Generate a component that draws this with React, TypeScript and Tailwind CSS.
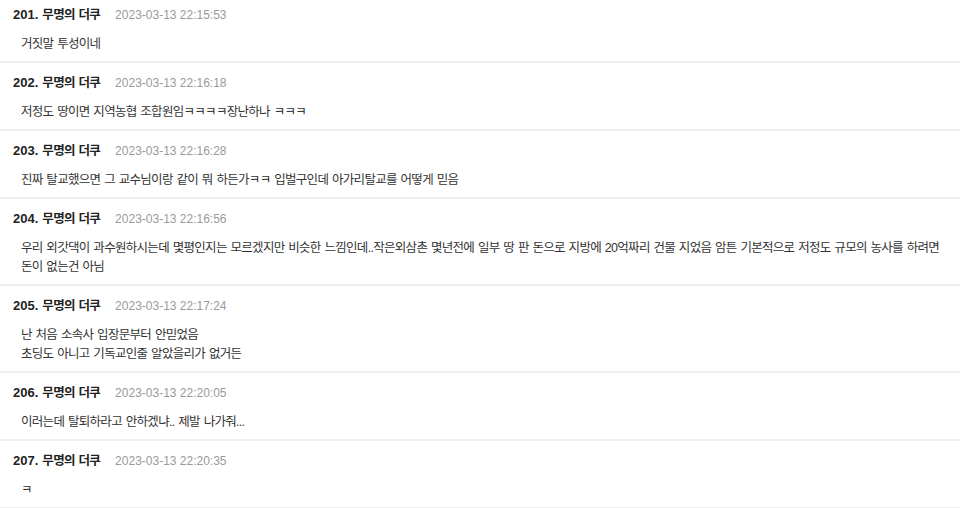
import React from "react";

type Comment = { no: number; time: string; text: string };

const comments: Comment[] = [
  { no: 201, time: "2023-03-13 22:15:53", text: "거짓말 투성이네" },
  { no: 202, time: "2023-03-13 22:16:18", text: "저정도 땅이면 지역농협 조합원임ㅋㅋㅋㅋ장난하나 ㅋㅋㅋ" },
  { no: 203, time: "2023-03-13 22:16:28", text: "진짜 탈교했으면 그 교수님이랑 같이 뭐 하든가ㅋㅋ 입벌구인데 아가리탈교를 어떻게 믿음" },
  {
    no: 204,
    time: "2023-03-13 22:16:56",
    text: "우리 외갓댁이 과수원하시는데 몇평인지는 모르겠지만 비슷한 느낌인데..작은외삼촌 몇년전에 일부 땅 판 돈으로 지방에 20억짜리 건물 지었음 암튼 기본적으로 저정도 규모의 농사를 하려면 돈이 없는건 아님",
  },
  { no: 205, time: "2023-03-13 22:17:24", text: "난 처음 소속사 입장문부터 안믿었음\n초딩도 아니고 기독교인줄 알았을리가 없거든" },
  { no: 206, time: "2023-03-13 22:20:05", text: "이러는데 탈퇴하라고 안하겠냐.. 제발 나가줘..." },
  { no: 207, time: "2023-03-13 22:20:35", text: "ㅋ" },
];

export default function App() {
  return (
    <div
      className="w-[960px] h-[508px] overflow-hidden bg-white"
      style={{ fontFamily: '"Liberation Sans", "Noto Sans CJK KR", Arial, sans-serif' }}
    >
      {comments.map((c, i) => (
        <div
          key={c.no}
          className={`pl-[12px] pr-[10px] pb-[7px] border-b-2 border-[#efefef] ${i === 0 ? "pt-[7px]" : "pt-[12px]"}`}
        >
          <div className="flex items-center h-[16px] leading-[16px]">
            <span className="ml-[1px] text-[13px] font-bold text-[#222]">{c.no}.</span>
            <span className="ml-[4px] text-[12.5px] font-bold text-[#222] tracking-[-0.7px] [word-spacing:1px]">
              무명의 더쿠
            </span>
            <span className="ml-[15px] text-[12px] text-[#9a9a9a]">{c.time}</span>
          </div>
          <div className="mt-[12px] pl-[9px] text-[12.5px] leading-[19px] text-[#333] tracking-[-0.7px] [word-spacing:1px] whitespace-pre-line">
            {c.text}
          </div>
        </div>
      ))}
    </div>
  );
}
